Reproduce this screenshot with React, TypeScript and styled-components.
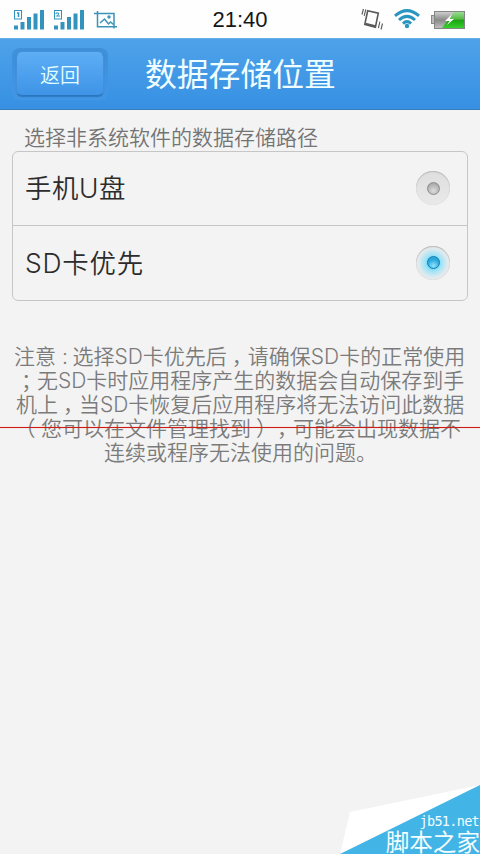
import React from "react";
import styled, { createGlobalStyle } from "styled-components";

const GlobalStyle = createGlobalStyle`
  * { box-sizing: border-box; }
  body { margin: 0; background: #f3f3f3; }
`;

const Screen = styled.div`
  position: relative;
  width: 480px;
  height: 854px;
  overflow: hidden;
  background: #f3f3f3;
  font-family: "Inter", "Noto Sans CJK SC", sans-serif;
`;

const StatusBar = styled.header`
  height: 38px;
  display: grid;
  grid-template-columns: 1fr 60px 1fr;
  align-items: center;
  background: #fefefe;
`;

const Indicators = styled.div<{ $end?: boolean }>`
  display: flex;
  justify-content: ${(p) => (p.$end ? "flex-end" : "flex-start")};
  height: 38px;
  svg { display: block; }
`;

const Clock = styled.time`
  font-family: "Liberation Sans", sans-serif;
  font-size: 22px;
  line-height: 38px;
  color: #161616;
  text-align: center;
  white-space: nowrap;
  padding-top: 1px;
`;

const TitleBar = styled.div`
  height: 72px;
  display: flex;
  align-items: flex-start;
  padding: 9px 12px 0;
  background: linear-gradient(#4ea2e9, #3790e3);
  border-top: 1px solid #68aee4;
  border-bottom: 1px solid #3b7dbc;
`;

const BackWell = styled.div`
  width: 96px;
  height: 52px;
  padding: 4px;
  border-radius: 8px;
  background: linear-gradient(#3f8fd8, #4196e6);
`;

const BackButton = styled.button`
  display: block;
  width: 88px;
  height: 44px;
  padding: 0;
  border: 1px solid #4290da;
  border-top-color: #62b0f4;
  border-bottom-color: #2b75bd;
  border-radius: 6px;
  background: linear-gradient(#5cadf4, #3f94e7);
  box-shadow: 0 1px 1px #2e7ac0;
  color: #e2ffff;
  font: 20px/39px "Noto Sans CJK SC", sans-serif;
  font-weight: 350;
`;

const Title = styled.h1`
  margin: 0 0 0 37px;
  font: 31.8px/48px "Noto Sans CJK SC", sans-serif;
  color: #f0ffff;
  white-space: nowrap;
`;

const Caption = styled.p`
  margin: 0;
  height: 41px;
  padding: 13px 0 0 24px;
  font-size: 21px;
  line-height: 30px;
  font-weight: 350;
  color: #747474;
  white-space: nowrap;
`;

const Options = styled.ul`
  list-style: none;
  margin: 0 12px;
  padding: 0;
  height: 150px;
  border: 1px solid #c6c6c6;
  border-radius: 6px;
`;

const Option = styled.li`
  height: 73px;
  display: flex;
  align-items: center;
  justify-content: space-between;
  padding: 0 17px 1px 12px;
  font-size: 26.4px;
  font-weight: 350;
  color: #2c2c2c;
  & + & {
    height: 75px;
    border-top: 1px solid #c6c6c6;
  }
`;

const Label = styled.span<{ $spacing: number }>`
  line-height: 36px;
  letter-spacing: ${(p) => p.$spacing}px;
`;

const Radio = styled.span<{ $on?: boolean }>`
  width: 34px;
  height: 34px;
  display: grid;
  place-items: center;
  border-radius: 50%;
  background: ${(p) =>
    p.$on
      ? "radial-gradient(circle, #69d8fb 0 20%, #a5e3f6 35%, #e3ebee 62%, #e5e5e5 72%)"
      : "linear-gradient(#dedede, #e9e9e9)"};
  box-shadow: inset 0 1px 1px #b9b9b9, inset 0 0 1px #cfcfcf;
  &::after {
    content: "";
    width: 11px;
    height: 11px;
    border-radius: 50%;
    border: 1px solid ${(p) => (p.$on ? "#0f7eb0" : "#8c8c8c")};
    background: ${(p) =>
      p.$on
        ? "radial-gradient(circle at 50% 80%, #8fe4ff, #2ca7dc 60%)"
        : "radial-gradient(circle at 50% 70%, #ddd, #aaa 75%)"};
  }
`;

const Note = styled.section`
  margin-top: 44px;
  font-size: 21px;
  font-weight: 350;
  line-height: 24px;
  color: #7b7b7b;
`;

const Line = styled.p<{ $indent: number }>`
  margin: 0;
  height: 24px;
  padding-left: ${(p) => p.$indent}px;
  white-space: nowrap;
`;

const Mark = styled.span<{ $before?: number; $after?: number }>`
  font-feature-settings: "halt" 1;
  margin-left: ${(p) => p.$before ?? 5}px;
  margin-right: ${(p) => p.$after ?? 5.5}px;
`;

const Strike = styled.div`
  position: absolute;
  left: 0;
  top: 427px;
  width: 480px;
  height: 1px;
  background: #cc1c14;
  box-shadow: 0 0 1px rgba(220, 50, 40, 0.6);
`;

const Corner = styled.div`
  position: absolute;
  right: 0;
  bottom: 0;
  width: 140px;
  height: 70px;
  svg { position: absolute; inset: 0; }
`;

const Brand = styled.div`
  position: relative;
  height: 70px;
  display: flex;
  flex-direction: column;
  align-items: flex-end;
  color: #f4fdff;
  white-space: nowrap;
`;

const Site = styled.span`
  margin-top: 29px;
  font: 13.5px/16px "DejaVu Sans Mono", "Liberation Mono", monospace;
  letter-spacing: -0.7px;
  padding-right: 1px;
`;

const SiteName = styled.span`
  font: 23.6px/24px "Noto Sans CJK SC", sans-serif;
`;

const Signal = ({ x, sim }: { x: number; sim: number }) => (
  <g transform={`translate(${x} 0)`} fill="#3294bd">
    <rect x="0" y="24.5" width="4" height="4" />
    <rect x="6.5" y="21" width="4" height="7.5" />
    <rect x="13" y="16" width="4" height="12.5" />
    <rect x="19.5" y="12.5" width="4" height="16" />
    <rect x="26" y="9" width="4" height="19.5" />
    <rect x=".5" y="9.5" width="7" height="8.5" fill="#f4fcff" stroke="#3294bd" />
    {sim === 1 ? (
      <path d="M3 12h1.5v4" fill="none" stroke="#3294bd" strokeWidth="1.5" />
    ) : (
      <path d="M2 13v-1h2.5v1.5L2.5 15H6" fill="none" stroke="#3294bd" />
    )}
  </g>
);

export default function App() {
  return (
    <>
      <GlobalStyle />
      <Screen>
        <StatusBar>
          <Indicators>
            <svg width="130" height="38">
              <Signal x={14} sim={1} />
              <Signal x={54} sim={2} />
              <g fill="none" stroke="#3b93b8" strokeWidth="1.5">
                <path d="M94 12.5h20v15M97.5 10v15.8H117" />
                <path d="M100 22l4.5-4 4 5 2-2 3 2.5" />
                <circle cx="109" cy="16" r="1" />
              </g>
            </svg>
          </Indicators>
          <Clock>21:40</Clock>
          <Indicators $end>
            <svg width="130" height="38">
              <g fill="none" stroke="#595959">
                <path d="M17.7 9.8L28.3 12.2 25.4 26.2 14.8 23.4z" strokeWidth="1.6" />
                <path d="M15.4 22.6l10.2 2.6" strokeWidth="2" />
                <path d="M12 13.5l1.4-5.5M14.2 14.8l1.6-6.5M28.4 27.2l1.5-6.5M31 28.5l1.5-6" strokeWidth="1.1" />
              </g>
              <g fill="none" stroke="#2995c0" strokeWidth="3">
                <path d="M45 14.8Q57 4.5 69 14.8" />
                <path d="M49 19Q57 11.7 65 19" />
                <path d="M53 22.6Q57 18.8 61 22.6" />
              </g>
              <circle cx="57" cy="25" r="2.2" fill="#2995c0" />
              <defs>
                <linearGradient id="shell" x2="0" y2="1">
                  <stop stopColor="#d2d2d2" />
                  <stop offset=".5" stopColor="#898989" />
                  <stop offset="1" stopColor="#c1c1c1" />
                </linearGradient>
                <linearGradient id="charge" x2="0" y2="1">
                  <stop stopColor="#9add91" />
                  <stop offset=".45" stopColor="#55b847" />
                  <stop offset=".5" stopColor="#19a310" />
                  <stop offset="1" stopColor="#38cf2e" />
                </linearGradient>
              </defs>
              <rect x="81.5" y="14.5" width="4" height="8" fill="#bcbcbc" stroke="#898989" />
              <rect x="84.5" y="10.5" width="30" height="17" fill="url(#shell)" stroke="#858585" />
              <path d="M104 11h10v16H92z" fill="url(#charge)" />
              <path d="M102 13l-7 7h4.5L97 24l7-6h-4.3z" fill="#fff" />
            </svg>
          </Indicators>
        </StatusBar>
        <TitleBar>
          <BackWell>
            <BackButton>返回</BackButton>
          </BackWell>
          <Title>数据存储位置</Title>
        </TitleBar>
        <main>
          <Caption>选择非系统软件的数据存储路径</Caption>
          <Options>
            <Option>
              <Label $spacing={0.6}>手机U盘</Label>
              <Radio />
            </Option>
            <Option>
              <Label $spacing={0.8}>SD卡优先</Label>
              <Radio $on />
            </Option>
          </Options>
          <Note>
            <Line $indent={14}>
              注意<Mark $before={6} $after={4.5}>:</Mark>选择SD卡优先后<Mark>，</Mark>请确保SD卡的正常使用
            </Line>
            <Line $indent={16}>
              <Mark>；</Mark>无SD卡时应用程序产生的数据会自动保存到手
            </Line>
            <Line $indent={16}>
              机上<Mark>，</Mark>当SD卡恢复后应用程序将无法访问此数据
            </Line>
            <Line $indent={20}>
              <Mark>（</Mark>您可以在文件管理找到<Mark>）</Mark><Mark>，</Mark>可能会出现数据不
            </Line>
            <Line $indent={104}>连续或程序无法使用的问题。</Line>
          </Note>
        </main>
        <Strike />
        <Corner>
          <svg width="140" height="70">
            <path d="M0 70L10 28 140 1v69z" fill="#fff" />
            <path d="M0 70L140 1v69z" fill="#42b4e6" />
          </svg>
          <Brand>
            <Site>jb51.net</Site>
            <SiteName>脚本之家</SiteName>
          </Brand>
        </Corner>
      </Screen>
    </>
  );
}
